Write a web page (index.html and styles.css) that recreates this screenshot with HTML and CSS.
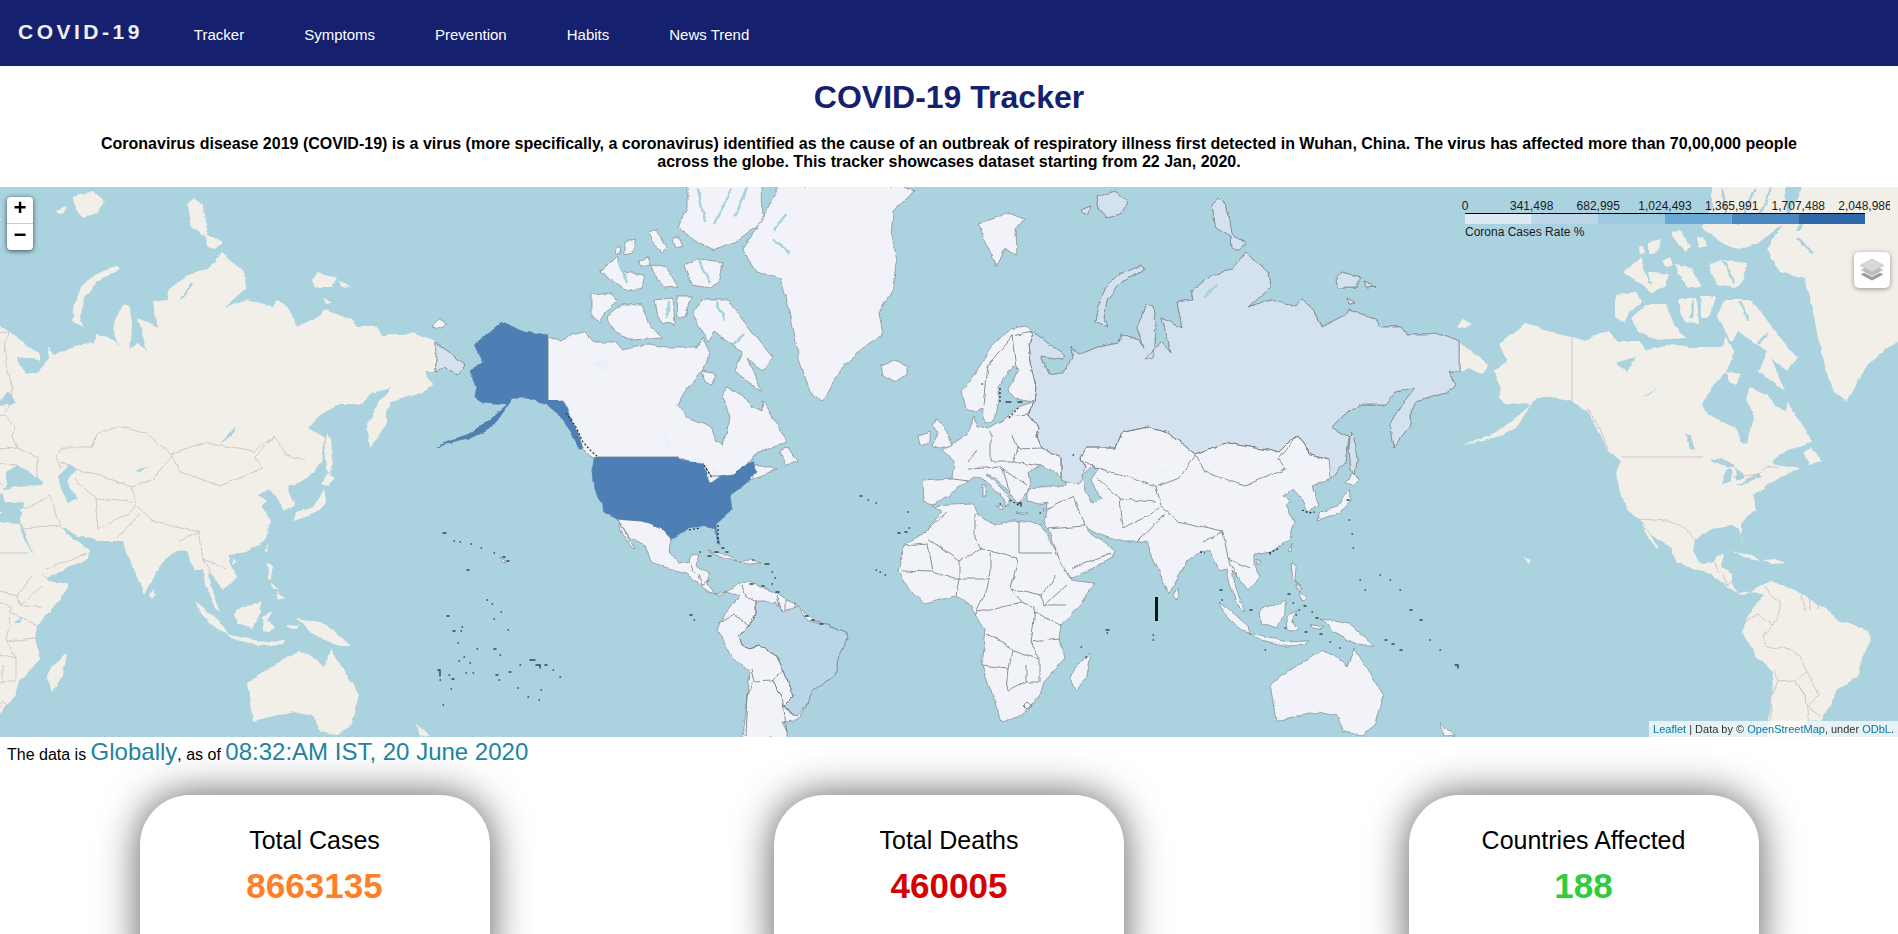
FILE: index.html
```html
<!DOCTYPE html>
<html lang="en">
<head>
  <meta charset="UTF-8">
  <title>COVID-19 Tracker</title>
  <link rel="stylesheet" href="styles.css">
</head>
<body>

<nav class="navbar">
  <div class="logo">COVID-19</div>
  <ul class="nav-links">
    <li><a href="#">Tracker</a></li>
    <li><a href="#">Symptoms</a></li>
    <li><a href="#">Prevention</a></li>
    <li><a href="#">Habits</a></li>
    <li><a href="#">News Trend</a></li>
  </ul>
</nav>

<header class="intro">
  <h1>COVID-19 Tracker</h1>
  <p>Coronavirus disease 2019 (COVID-19) is a virus (more specifically, a coronavirus) identified as the cause of an outbreak of respiratory illness first detected in Wuhan, China. The virus has affected more than 70,00,000 people across the globe. This tracker showcases dataset starting from 22 Jan, 2020.</p>
</header>

<div class="map">
  <!-- coordinates are page pixels, one world is 1024 wide -->
  <svg class="world" viewBox="0 187 1898 550" preserveAspectRatio="none">
    <defs>
      <!-- roughens the hand traced coastlines -->
      <filter id="coast" filterUnits="userSpaceOnUse" x="0" y="187" width="1898" height="550">
        <feTurbulence type="fractalNoise" baseFrequency="0.09" numOctaves="3" seed="4" result="noise"/>
        <feDisplacementMap in="SourceGraphic" in2="noise" scale="6" xChannelSelector="R" yChannelSelector="G" color-interpolation-filters="sRGB"/>
      </filter>
      <clipPath id="alaska-clip"><path d="M400 300H548V400H600V470H400Z"/></clipPath>
      <clipPath id="states-clip"><rect x="570" y="457" width="220" height="110"/></clipPath>
      <g id="land">
        <!-- eurasia -->
        <path d="M934 506 925 503 924 482 954 480 956 463 944 452 958 443 967 437 972 430 974 417 979 428 989 430 1003 423 1009 418 1018 408 1036 403 1016 400 1009 393 1020 370 1014 368 1000 388 1000 402 996 422 987 425 983 410 978 413 967 410 963 393 980 370 994 347 1012 330 1025 327 1038 335 1065 356 1065 361 1042 358 1050 376 1063 374 1075 359 1073 348 1080 356 1100 348 1120 344 1122 336 1140 341 1145 349 1138 329 1148 306 1155 308 1157 326 1155 359 1147 361 1163 343 1172 353 1163 319 1183 329 1178 303 1193 301 1193 293 1213 276 1233 271 1247 254 1270 273 1272 289 1250 309 1272 301 1297 308 1303 301 1315 311 1323 328 1347 316 1350 311 1377 321 1382 328 1402 328 1408 336 1430 336 1437 334 1461 343 1461 373 1450 373 1458 386 1447 394 1417 403 1412 413 1412 426 1395 449 1392 426 1405 403 1417 389 1397 394 1387 406 1363 406 1345 416 1333 429 1350 439 1347 463 1332 480 1313 488 1320 507 1309 513 1302 498 1295 490 1284 497 1293 503 1287 507 1296 523 1291 540 1273 553 1255 556 1255 565 1262 578 1249 592 1240 580 1233 572 1237 590 1246 613 1241 610 1231 585 1228 570 1220 572 1212 553 1202 552 1188 563 1170 595 1153 557 1148 543 1126 543 1104 537 1086 528 1090 533 1104 543 1116 552 1112 560 1072 580 1063 567 1048 528 1045 523 1048 513 1049 503 1041 505 1028 503 1028 492 1041 488 1068 487 1068 483 1054 472 1043 467 1030 473 1032 487 1028 493 1019 507 1014 497 996 480 987 475 1003 490 1012 500 1008 507 1006 500 996 492 985 480 976 478 970 482 954 493Z"/>
        <!-- africa, madagascar -->
        <path d="M934 507 974 505 979 515 996 527 1014 522 1043 525 1050 540 1072 582 1095 585 1086 600 1063 627 1061 640 1066 660 1045 683 1041 697 1023 717 1003 723 983 667 987 630 976 617 974 607 956 597 927 605 912 593 900 573 905 547 927 533 943 512Z"/>
        <path d="M1092 655 1088 677 1078 693 1072 680 1078 667Z"/>
        <!-- north america -->
        <path d="M476 346 504 324 526 333 548 338 563 343 573 336 586 333 596 343 616 343 623 351 649 346 669 349 699 349 704 338 711 353 709 363 703 373 686 393 679 406 689 419 713 429 718 443 724 446 731 419 724 399 728 389 744 396 753 408 763 413 764 403 774 418 783 433 789 443 773 449 756 456 749 465 778 470 761 478 749 483 741 490 731 497 733 512 718 525 718 540 720 545 716 530 709 527 689 530 673 540 671 553 679 565 691 563 693 557 701 556 698 567 709 575 709 585 716 595 728 593 721 597 711 593 703 587 689 575 676 572 653 563 648 548 629 537 618 520 606 513 596 490 594 472 598 462 589 455 584 450 576 433 566 413 548 402 529 399 514 399 500 419 493 429 470 440 439 447 470 436 486 425 509 406 484 404 476 399 478 388 471 373 484 363Z"/>
        <!-- greenland -->
        <path d="M779 187 904 187 916 193 895 212 893 237 898 263 895 290 880 313 884 337 864 350 842 370 824 403 811 393 800 360 791 313 782 280 757 273 744 250 753 237 775 200Z"/>
        <!-- arctic canada -->
        <path d="M689 187 763 187 764 223 736 244 716 251 703 246 679 229 689 209Z"/>
        <path d="M649 234 658 231 668 249 663 253 653 243Z"/>
        <path d="M686 266 699 261 724 264 721 281 713 289 693 286Z"/>
        <path d="M653 266 668 269 679 288 666 289 656 276Z"/>
        <path d="M601 273 619 258 623 273 646 276 643 289 629 293 616 284Z"/>
        <path d="M626 244 638 241 633 254 626 256Z"/>
        <path d="M593 296 613 294 619 303 606 314 601 324 593 318Z"/>
        <path d="M608 319 623 306 643 306 651 326 663 339 633 341 616 333Z"/>
        <path d="M656 301 674 299 676 326 663 323 658 313Z"/>
        <path d="M678 298 693 298 686 319 679 319Z"/>
        <path d="M694 316 703 301 729 301 753 333 774 359 764 373 749 359 763 393 736 373 744 353 716 333 709 343 703 333Z"/>
        <path d="M703 373 718 376 713 386 706 383Z"/>
        <path d="M781 453 789 448 799 463 786 466Z"/>
        <path d="M640 262 648 258 651 266 643 268Z M674 240 680 238 684 248 677 250Z M616 250 621 247 622 255 617 256Z"/>
        <!-- caribbean, baja -->
        <path d="M709 552 729 557 738 562 726 560Z"/>
        <path d="M741 562 752 561 763 565 750 566Z"/>
        <path d="M619 522 636 550 633 549 623 534Z"/>
        <!-- south america -->
        <path d="M728 593 741 585 749 583 773 592 786 600 803 610 816 622 846 632 849 640 839 660 836 677 813 693 808 707 798 722 783 723 788 733 788 740 744 740 746 722 749 697 751 673 733 658 719 632 726 615 741 597Z"/>
        <!-- arctic russia, svalbard, iceland, british isles -->
        <path d="M1143 266 1145 271 1123 283 1110 299 1105 319 1110 329 1097 323 1100 306 1107 289 1120 276Z"/>
        <path d="M1220 199 1227 206 1230 216 1233 236 1248 244 1240 251 1233 249 1232 238 1217 229 1215 219 1213 206Z"/>
        <path d="M980 225 1000 218 1008 213 1026 220 1017 231 1018 257 1006 250 998 267 985 240Z"/>
        <path d="M1082 212 1092 208 1090 215 1085 216Z M1098 198 1118 193 1130 203 1122 215 1108 219 1100 210Z"/>
        <path d="M1337 281 1343 274 1362 279 1357 289 1340 289Z M1365 283 1377 288 1368 289Z M1348 299 1357 304 1350 305Z"/>
        <path d="M882 367 895 362 909 367 909 377 895 383 884 377Z"/>
        <path d="M938 420 947 430 954 447 942 450 933 447 940 433 933 427Z"/>
        <path d="M920 437 931 433 931 443 922 447Z"/>
        <path d="M1352 434 1356 440 1358 462 1356 476 1352 470 1350 450Z"/>
        <!-- chukotka tip, wrangel: east of the date line -->
        <path d="M437 344 450 353 459 361 466 366 459 376 446 369 437 373Z"/>
        <path d="M434 327 440 321 449 325 442 329Z"/>
        <!-- asia islands -->
        <path d="M1319 522 1322 513 1338 508 1347 495 1350 490 1352 503 1342 514 1325 520Z"/>
        <path d="M1347 485 1354 475 1361 480 1354 487Z"/>
        <path d="M1220 603 1232 612 1250 628 1252 635 1241 630 1228 617Z"/>
        <path d="M1251 635 1275 640 1288 643 1310 642 1308 646 1285 647 1262 642Z"/>
        <path d="M1260 615 1267 607 1280 606 1286 602 1286 613 1278 630 1263 625Z"/>
        <path d="M1288 618 1299 613 1293 622 1301 630 1294 633 1289 632Z"/>
        <path d="M1292 565 1297 567 1296 582 1301 586 1294 580Z"/>
        <path d="M1301 593 1310 600 1303 602Z M1297 585 1304 590 1298 591Z"/>
        <path d="M1294 545 1293 553 1290 552Z M1258 560 1262 563 1258 566Z"/>
        <path d="M1322 620 1335 622 1351 625 1376 647 1365 647 1353 643 1335 633 1330 626Z"/>
        <path d="M1312 626 1325 627 1322 630 1313 629Z"/>
        <path d="M1179 590 1181 597 1178 601 1175 596Z"/>
        <!-- mediterranean -->
        <path d="M984 487 987 487 987 497 984 497Z M998 507 1006 506 1004 511Z M1018 514 1028 514 1026 516Z M1044 510 1050 510 1046 513Z"/>
        <!-- australia, nz -->
        <path d="M1272 685 1299 667 1309 660 1324 652 1336 657 1349 668 1356 650 1385 697 1376 727 1363 737 1345 733 1338 717 1320 713 1278 723Z"/>
        <path d="M1442 725 1456 737 1445 738Z"/>
        <path d="M502 559 508 562 506 565Z"/>
      </g>
      <g id="lakes">
        <path d="M688 462 699 459 713 468 703 468Z"/>
        <path d="M699 487 703 470 709 470 708 483Z"/>
        <path d="M713 468 723 478 714 483Z"/>
        <path d="M713 487 736 475 738 478 718 487Z"/>
        <path d="M593 365 613 359 605 373Z"/>
        <path d="M619 399 636 388 626 396Z"/>
        <path d="M663 436 668 436 673 451 668 450Z"/>
        <path d="M1245 446 1261 428 1258 436Z"/>
        <path d="M1024 406 1034 393 1042 404Z"/>
        <path d="M1160 473 1174 467 1165 474Z"/>
        <path d="M1040 625 1047 618 1046 625Z"/>
      </g>
      <!-- fjords and sounds, on top of the country fills as well -->
      <path id="fjords" d="M699 190 706 223M733 190 716 226M749 189 736 219M700 262 712 284M620 262 628 285M670 302 668 320M718 303 726 322M788 215 775 232M775 240 790 255M745 335 735 345M1205 300 1218 285"/>
      <g id="borders">
        <path d="M565 410 576 427 585 450M704 465 712 478 722 478 736 476 744 468 756 470M618 520 643 522 663 530 673 541M691 563 697 574M700 576 704 587 713 580"/>
        <path d="M743 587 747 597 757 603 757 615 750 627 740 638M720 625 735 615 750 627M778 597 783 613M787 600 787 612M796 604 796 610M740 638 743 647 753 650 760 647 777 657 785 673 795 697 785 708 798 718M752 670 755 683 772 682 785 673M783 697 772 682M755 683 749 697 747 737M772 682 783 697 788 733"/>
        <path d="M950 512 925 535M905 547 929 545 934 573 903 572M976 515 976 540 983 550 961 562 929 540M1019 560 992 552 983 550M992 552 992 573 988 590 976 617M1019 560 1012 590 1043 597 1057 577M961 562 961 580 990 580M934 573 956 580 961 580M958 597 961 580M1012 590 1023 603 1036 608 1034 630 1032 643 1041 660 1014 653 1010 647 988 635M979 613 996 610 1023 603M1036 613 1063 627M1068 607 1045 607 1043 597M1068 587 1045 607M983 667 1010 670 1014 653M1010 670 1008 693M1008 693 1028 683 1041 683M1028 667 1028 683M1041 660 1041 683M1032 643 1061 640M1025 707 1029 703 1034 707 1029 711Z"/>
        <path d="M1086 463 1108 473 1130 478 1157 488 1179 480 1197 457 1206 473 1246 487 1287 470 1280 460 1298 438M1157 488 1162 507 1179 523 1224 533 1229 560 1251 570M1099 480 1121 500 1157 503M1121 500 1124 530M1124 530 1153 515 1162 507M1139 543 1166 515M1075 497 1086 527M1050 510 1075 497M1049 530 1086 527M1072 570 1112 555M1204 543 1224 533M1229 560 1240 580"/>
        <path d="M970 463 979 450M954 480 970 482M992 433 992 463M1014 437 1019 450 1014 463 992 463M1019 450 1043 449M1014 463 1043 467M970 470 1001 468 1028 487M1005 470 1012 497M1014 337 989 367 985 407M1014 337 1018 370M1014 337 1034 333 1033 338M1009 418 1030 416"/>
        <path d="M1063 481 1063 459 1043 449 1038 438 1040 429 1030 416 1036 403 1038 389 1033 373 1030 346 1033 338M1330 461 1312 456 1300 438 1290 443 1280 453 1240 446 1230 444 1210 451 1197 456 1170 434 1147 428 1123 434 1117 449 1087 449 1082 459 1087 469"/>
      </g>
      <!-- parallels and meridians stay straight -->
      <path id="straight-borders" d="M548 338V402M598 457H679M1019 522V553H1052"/>
    </defs>

    <rect class="sea" x="0" y="187" width="1898" height="550"/>

    <g filter="url(#coast)">
      <!-- basemap, repeated -->
      <use href="#land" class="base-land" x="-1024"/>
      <use href="#land" class="base-land"/>
      <use href="#land" class="base-land" x="1024"/>
      <use href="#lakes" class="base-lakes" x="-1024"/>
      <use href="#lakes" class="base-lakes"/>
      <use href="#lakes" class="base-lakes" x="1024"/>
      <path class="base-lakes" d="M59 477 70 467 77 470 68 483 79 500 70 505 62 490Z"/>
      <!-- choropleth layer -->
      <use href="#land" class="rate-0"/>
      <path class="rate-2" d="M1038 335 1065 356 1065 361 1042 358 1050 376 1063 374 1075 359 1073 348 1080 356 1100 348 1120 344 1122 336 1140 341 1145 349 1138 329 1148 306 1155 308 1157 326 1155 359 1147 361 1163 343 1172 353 1163 319 1183 329 1178 303 1193 301 1193 293 1213 276 1233 271 1247 254 1270 273 1272 289 1250 309 1272 301 1297 308 1303 301 1315 311 1323 328 1347 316 1350 311 1377 321 1382 328 1402 328 1408 336 1430 336 1437 334 1461 343 1461 373 1450 373 1458 386 1447 394 1417 403 1412 413 1412 426 1395 449 1392 426 1405 403 1417 389 1397 394 1387 406 1363 406 1345 416 1333 429 1350 439 1347 463 1332 480 1330 461 1312 456 1300 438 1290 443 1280 453 1240 446 1230 444 1210 451 1197 456 1170 434 1147 428 1123 434 1117 449 1087 449 1082 459 1087 469 1080 486 1068 483 1063 481 1063 459 1043 449 1038 438 1040 429 1030 416 1036 403 1038 389 1033 373 1030 346 1033 338Z"/>
      <path class="rate-2" d="M1143 266 1145 271 1123 283 1110 299 1105 319 1110 329 1097 323 1100 306 1107 289 1120 276Z M1220 199 1227 206 1230 216 1233 236 1248 244 1240 251 1233 249 1232 238 1217 229 1215 219 1213 206Z M1082 212 1092 208 1090 215 1085 216Z M1098 198 1118 193 1130 203 1122 215 1108 219 1100 210Z M1337 281 1343 274 1362 279 1357 289 1340 289Z M1365 283 1377 288 1368 289Z M1348 299 1357 304 1350 305Z M1352 434 1356 440 1358 462 1356 476 1352 470 1350 450Z M437 344 450 353 459 361 466 366 459 376 446 369 437 373Z"/>
      <path class="rate-3" d="M740 638 750 627 757 615 757 603 777 603 785 613 800 608 810 622 830 627 846 632 849 640 839 660 836 677 813 693 808 707 798 718 785 708 795 697 785 673 777 657 760 647 753 650 743 647Z"/>
      <path class="inland" d="M1083 477 1094 467 1101 470 1092 483 1103 500 1094 505 1086 490Z"/>
      <use href="#fjords" class="fjord" x="-1024"/>
      <use href="#fjords" class="fjord"/>
      <use href="#fjords" class="fjord" x="1024"/>
    </g>

    <g filter="url(#coast)">
      <use href="#borders" class="base-borders" x="-1024"/>
      <use href="#borders" class="base-borders" x="1024"/>
      <use href="#borders" class="rate-borders"/>
    </g>
    <use href="#straight-borders" class="base-borders" x="1024"/>
    <use href="#straight-borders" class="base-borders" x="-1024"/>
    <use href="#straight-borders" class="rate-borders"/>

    <!-- the two blue fills keep their straight edges, so clip after roughening -->
    <g clip-path="url(#alaska-clip)">
      <path class="rate-6" filter="url(#coast)" d="M476 346 504 324 526 333 556 338V402H565L576 427 585 450 580 450 570 430 559 415 548 406 529 399 514 399 500 419 493 429 470 440 439 447 470 436 486 425 509 406 484 404 476 399 478 388 471 373 484 363Z"/>
    </g>
    <g clip-path="url(#states-clip)">
      <path class="rate-6" filter="url(#coast)" d="M598 448H679V457L686 462 704 465 712 485 722 478 736 476 744 468 753 463 759 472 749 483 741 490 731 497 733 512 718 525 718 540 720 545 716 530 709 527 689 530 673 540 663 530 643 522 618 520 606 513 596 490 594 472Z"/>
    </g>

    <!-- small islands and fjord coasts that render almost black -->
    <path class="shore" d="M566 413 576 427 583 442 592 452 598 457M1000 388 1000 402M1009 418 1018 408M704 465 712 478M718 525 718 540 720 545M689 530 700 528M1269 553 1280 548M1302 510 1309 513 1315 512M1200 552 1205 553M1010 500 1020 506"/>
    <path class="islets" d="M443 533h3M454 541h.5M460 542h.5M471 544h.5M481 548h.5M494 553h.5M503 557h2M507 561h2M467 570h2M447 616h2M487 600h.5M492 604h.5M501 612h.5M494 619h.5M453 631h2M461 631h.5M462 627h.5M508 630h.5M458 643h.5M477 649h.5M494 649h2M500 655h.5M464 657h.5M459 661h.5M470 663h.5M473 673h.5M449 675h.5M438 670h2v6M440 680h.5M451 689h.5M452 679h2M466 673h.5M496 675h2M499 680h.5M509 672h2M520 665h.5M530 660h5M536 665h4v3M545 665h2M553 670h.5M560 677h.5M541 690h.5M518 688h.5M528 697h.5M539 700h.5M443 705h.5M860 496h2M868 500h.5M876 503h.5M898 533h2M905 532h2M909 528h.5M876 570h.5M880 572h.5M885 575h.5M700 552h.5M708 556h3M715 552h3M722 548h2M726 552h2M753 560h.5M765 564h4M772 572h.5M775 578h.5M772 584h.5M750 584h3M762 586h2M776 592h3M805 616h3M812 620h2M820 624h3M690 615h2M694 620h.5M1106 630h3M1107 633h.5M1153 635h.5M1153 640h.5M1081 647h.5M1086 657h.5M1347 500h2M1349 520h.5M1352 534h.5M1353 548h.5M1360 580h.5M1365 590h.5M1380 575h.5M1390 580h.5M1400 590h.5M1410 610h2M1420 620h2M1430 640h.5M1440 650h.5M1455 665h3v3M1385 640h2M1392 644h2M1400 650h2M1288 594h2M1293 603h.5M1299 610h.5M1304 606h2M1296 615h.5M1312 612h.5M1316 618h2M1305 632h2M1320 634h2M1330 642h.5M1340 648h.5M1285 628h.5M1265 650h.5M1250 610h2M1220 590h2M1222 600h.5M1018 402h4M1006 402h5M1018 503h3v3M1000 504h.5M1073 455h.5M1270 554h.5M1040 513h.5M908 512h.5M982 384h.5"/>
    <rect class="maldives" x="1155" y="597" width="3" height="24"/>
  </svg>

  <div class="zoom-control">
    <a href="#">+</a>
    <a href="#">&minus;</a>
  </div>

  <svg class="legend" width="435" height="50" viewBox="0 0 435 50">
    <text x="10" y="12" text-anchor="middle">0</text>
    <text x="76.7" y="12" text-anchor="middle">341,498</text>
    <text x="143.3" y="12" text-anchor="middle">682,995</text>
    <text x="210" y="12" text-anchor="middle">1,024,493</text>
    <text x="276.7" y="12" text-anchor="middle">1,365,991</text>
    <text x="343.3" y="12" text-anchor="middle">1,707,488</text>
    <text x="410" y="12" text-anchor="middle">2,048,986</text>
    <rect class="step-1" x="10" y="16" width="66.7" height="10"/>
    <rect class="step-2" x="76.7" y="16" width="66.7" height="10"/>
    <rect class="step-3" x="143.3" y="16" width="66.7" height="10"/>
    <rect class="step-4" x="210" y="16" width="66.7" height="10"/>
    <rect class="step-5" x="276.7" y="16" width="66.7" height="10"/>
    <rect class="step-6" x="343.3" y="16" width="66.7" height="10"/>
    <line class="axis" x1="10" y1="15.5" x2="410" y2="15.5"/>
    <text x="10" y="38">Corona Cases Rate %</text>
  </svg>

  <div class="layers-control">
    <svg width="26" height="26" viewBox="0 0 26 26">
      <path class="layer-3" d="M13 11 25 17.500 13 24 1 17.500Z"/>
      <path class="layer-2" d="M13 6.500 25 13 13 19.500 1 13Z"/>
      <path class="layer-1" d="M13 2 25 8.500 13 15 1 8.500Z"/>
    </svg>
  </div>

  <div class="attribution"><a href="#">Leaflet</a> | Data by &copy; <a href="#">OpenStreetMap</a>, under <a href="#">ODbL</a>.</div>
</div>

<p class="as-of">The data is <span class="highlight">Globally</span>, as of <span class="highlight">08:32:AM IST, 20 June 2020</span></p>

<section class="cards">
  <div class="card">
    <h3>Total Cases</h3>
    <div class="count orange">8663135</div>
  </div>
  <div class="card">
    <h3>Total Deaths</h3>
    <div class="count red">460005</div>
  </div>
  <div class="card">
    <h3>Countries Affected</h3>
    <div class="count green">188</div>
  </div>
</section>

</body>
</html>
```

FILE: styles.css
```css
html, body {
  height: 100%;
  overflow: hidden;
}
body {
  font-family: "Liberation Sans", Arial, sans-serif;
  background-color: #fff;
  color: #000;
  margin: 0;
  padding: 0;
}
.navbar {
  background-color: #15216f;
  height: 66px;
  display: flex;
  align-items: center;
  padding-left: 18px;
  box-sizing: border-box;
}
.logo {
  color: #eef0f6;
  font-size: 21px;
  font-weight: bold;
  letter-spacing: 3.5px;
  margin-top: -2px;
}
.nav-links {
  list-style: none;
  display: flex;
  gap: 60px;
  margin: 4px 0 0 51px;
  padding: 0;
}
.nav-links li a {
  color: #fff;
  font-size: 15px;
  text-decoration: none;
}
.intro {
  height: 121px;
  text-align: center;
  overflow: hidden;
}
.intro h1 {
  color: #15216f;
  font-size: 32px;
  margin: 12px 0 0;
  line-height: 38px;
}
.intro p {
  font-size: 16px;
  font-weight: bold;
  line-height: 18.4px;
  margin: 19px 90px 0;
}
.map {
  position: relative;
  height: 550px;
  overflow: hidden;
}
.world {
  display: block;
  width: 100%;
  height: 100%;
}
.sea {
  fill: #aad3df;
}
.base-land {
  fill: #f2efe9;
}
.base-lakes {
  fill: #aad3df;
}
.base-borders {
  fill: none;
  stroke: #c4b4bc;
  stroke-width: 0.7;
}
.rate-0, .rate-2, .rate-3, .rate-6 {
  stroke: #6b7378;
  stroke-width: 0.6;
  fill-opacity: 0.9;
}
.rate-0 {
  fill: #f1f3fa;
}
.rate-2 {
  fill: #d0dfec;
}
.rate-3 {
  fill: #b3d3e3;
}
.rate-6 {
  fill: #4d7eb4;
  fill-opacity: 1;
  stroke: #4d7eb4;
}
.inland {
  fill: #aad3df;
  stroke: #6b7378;
  stroke-width: 0.6;
}
.fjord {
  fill: none;
  stroke: #aad3df;
  stroke-width: 2.5;
}
.rate-borders {
  fill: none;
  stroke: #70767c;
  stroke-width: 0.8;
}
.shore {
  fill: none;
  stroke: #1c2c36;
  stroke-width: 1.2;
  stroke-dasharray: 2 2;
}
.islets {
  fill: none;
  stroke: #2c4550;
  stroke-width: 1.4;
  stroke-linecap: round;
}
.maldives {
  fill: #0c1418;
}
.zoom-control {
  position: absolute;
  top: 10px;
  left: 7px;
  width: 26px;
  background: #fff;
  border-radius: 4px;
  box-shadow: 0 1px 5px rgba(0,0,0,0.65);
}
.zoom-control a {
  display: block;
  height: 26px;
  text-align: center;
  color: #000;
  font: bold 22px/26px "Liberation Mono", monospace;
  text-decoration: none;
}
.zoom-control a:first-child {
  border-bottom: 1px solid #ccc;
}
.legend {
  position: absolute;
  top: 11px;
  right: 8px;
}
.legend text {
  font-size: 12px;
  fill: #1a1a1a;
}
.axis {
  stroke: #000;
  stroke-width: 1.2;
}
.step-1 { fill: #dde9f3; }
.step-2 { fill: #bdd7e9; }
.step-3 { fill: #9fc9e0; }
.step-4 { fill: #6aa8d6; }
.step-5 { fill: #4a86c0; }
.step-6 { fill: #2f68a8; }
.layers-control {
  position: absolute;
  top: 65px;
  right: 8px;
  width: 36px;
  height: 36px;
  display: flex;
  align-items: center;
  justify-content: center;
  background: #fff;
  border-radius: 5px;
  box-shadow: 0 1px 5px rgba(0,0,0,0.4);
}
.layer-1 { fill: #d8d8d8; stroke: #b5b5b5; stroke-width: 0.5; }
.layer-2 { fill: #bdbdbd; stroke: #fff; stroke-width: 0.8; }
.layer-3 { fill: #9d9d9d; stroke: #fff; stroke-width: 0.8; }
.attribution {
  position: absolute;
  right: 0;
  bottom: 0;
  background: rgba(255,255,255,0.7);
  color: #333;
  font-size: 11px;
  line-height: 16px;
  padding: 0 4px;
}
.attribution a {
  color: #0078a8;
  text-decoration: none;
}
.as-of {
  font-size: 16px;
  margin: 0;
  padding-left: 7px;
  height: 58px;
  line-height: 30px;
  box-sizing: border-box;
}
.highlight {
  font-size: 24px;
  color: #2185a0;
}
.cards {
  display: flex;
  justify-content: center;
  gap: 284.5px;
}
.card {
  width: 350px;
  height: 200px;
  border-radius: 50px;
  background: #fff;
  text-align: center;
  box-shadow: 0 0 40px rgba(0,0,0,0.65);
  padding-top: 31px;
  box-sizing: border-box;
}
.card h3 {
  font-size: 25px;
  font-weight: normal;
  margin: 0;
  line-height: 28px;
}
.count {
  font-size: 35px;
  font-weight: bold;
  line-height: 40px;
  margin-top: 12px;
}
.orange { color: #ff7f27; }
.red { color: #d50000; }
.green { color: #2ecc40; }
```
